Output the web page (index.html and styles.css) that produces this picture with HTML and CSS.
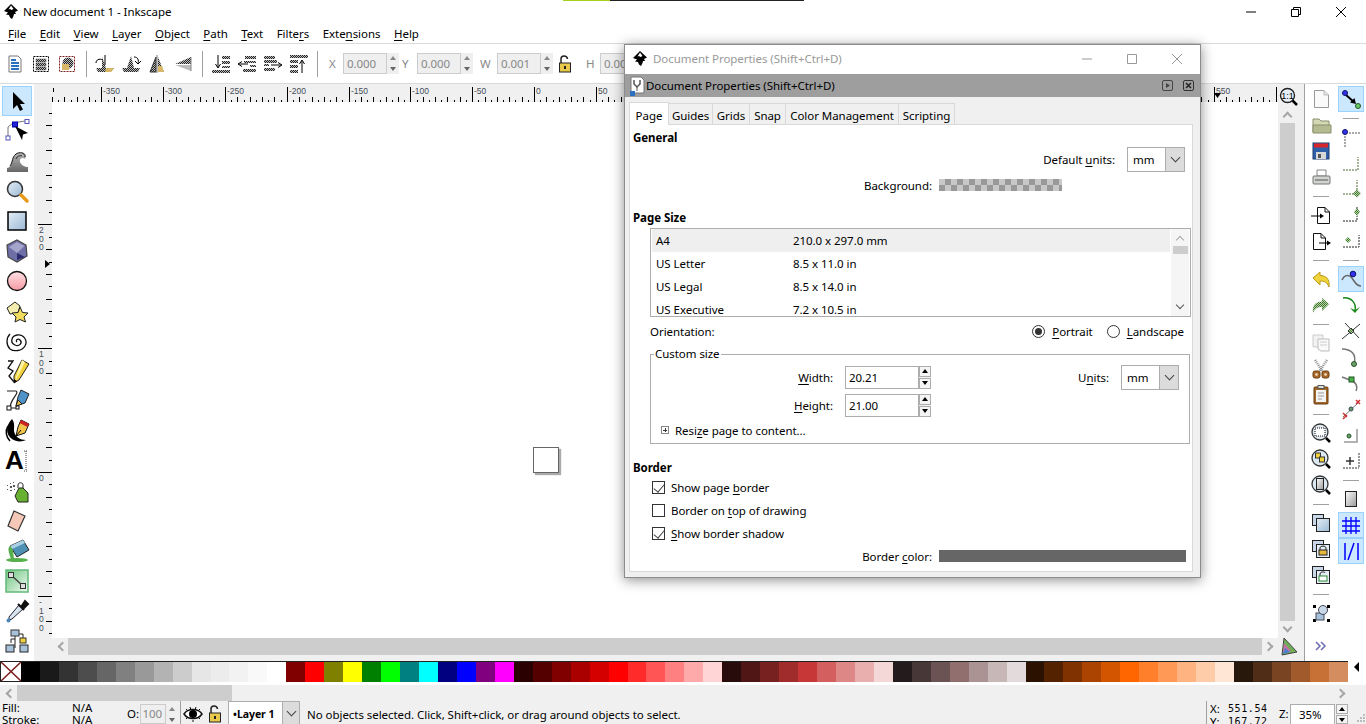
FILE: index.html
```html
<!DOCTYPE html>
<html lang="en">
<head>
    <title>New document 1 - Inkscape</title>
    <link rel="stylesheet" href="styles.css">
</head>
<body>
    <!-- shared gradients and the dither used by disabled icons -->
    <svg class="defs" aria-hidden="true">
        <defs>
            <pattern id="dith" width="2" height="2" patternUnits="userSpaceOnUse"><rect width="2" height="2" fill="#bbb"/><rect width="1" height="1" fill="#222"/><rect x="1" y="1" width="1" height="1" fill="#222"/></pattern>
            <pattern id="dithGreen" width="2" height="2" patternUnits="userSpaceOnUse"><rect width="2" height="2" fill="#b9cfa8"/><rect width="1" height="1" fill="#3d7a2e"/><rect x="1" y="1" width="1" height="1" fill="#3d7a2e"/></pattern>
            <linearGradient id="gBlue" x1="0" y1="0" x2="1" y2="1"><stop offset="0" stop-color="#e4edf5"/><stop offset="1" stop-color="#9bb9d6"/></linearGradient>
            <linearGradient id="gPink" x1="0" y1="0" x2="0" y2="1"><stop offset="0" stop-color="#ffe0e3"/><stop offset="1" stop-color="#f59aa5"/></linearGradient>
            <linearGradient id="gGray" x1="0" y1="0" x2="0" y2="1"><stop offset="0" stop-color="#bbb"/><stop offset="1" stop-color="#666"/></linearGradient>
            <linearGradient id="gGreen" x1="0" y1="0" x2="1" y2="1"><stop offset="0" stop-color="#6cc47e"/><stop offset="1" stop-color="#f2faf3"/></linearGradient>
            <linearGradient id="gPage" x1="0" y1="0" x2="1" y2="1"><stop offset="0" stop-color="#fff"/><stop offset="1" stop-color="#999"/></linearGradient>
        </defs>
    </svg>

    <div class="app">
        <div class="top-strip"><span class="strip-green"></span><span class="strip-dark"></span></div>

        <header class="titlebar">
            <svg class="logo" viewBox="0 0 16 16"><path d="M8 0 15 6.500 12 8 13 10H11L10.500 12 9 15 7 13.500 6 11 3 10.500 5 8.500 1 7Z"/><path d="M8 1.500 10.500 5 8.500 6 7 5 5.500 5.500Z" fill="#fff"/></svg>
            <span class="title-text">New document 1 - Inkscape</span>
            <div class="win-buttons">
                <svg viewBox="0 0 12 12"><path d="M1 6H11" stroke="#000"/></svg>
                <svg viewBox="0 0 12 12"><path d="M1.500 3.500H8.500V10.500H1.500ZM3.500 3.500V1.500H10.500V8.500H8.500" fill="none" stroke="#000"/></svg>
                <svg viewBox="0 0 12 12"><path d="M1 1 11 11M11 1 1 11" stroke="#000"/></svg>
            </div>
        </header>

        <nav class="menubar">
            <a><u>F</u>ile</a>
            <a><u>E</u>dit</a>
            <a><u>V</u>iew</a>
            <a><u>L</u>ayer</a>
            <a><u>O</u>bject</a>
            <a><u>P</u>ath</a>
            <a><u>T</u>ext</a>
            <a>Filte<u>r</u>s</a>
            <a>Exte<u>n</u>sions</a>
            <a><u>H</u>elp</a>
        </nav>

        <div class="commands">
            <span class="cmd"><svg class="ico" viewBox="0 0 24 24"><path d="M6 4H15L18 7V20H6Z" fill="#fff" stroke="#777"/><path d="M8 8H13M8 11H16M8 14H16M8 17H16" stroke="#2a6fc0" stroke-width="2"/></svg></span>
            <span class="cmd"><svg class="ico" viewBox="0 0 24 24"><rect x="4.500" y="4.500" width="15" height="15" fill="none" stroke="#000" stroke-dasharray="2 1"/><path d="M7 7H17V10H7ZM7 11H17V14H7ZM7 15H17V18H7Z" fill="url(#dith)" stroke="#555" stroke-width="0.500"/></svg></span>
            <span class="cmd"><svg class="ico" viewBox="0 0 24 24"><rect x="4.500" y="4.500" width="15" height="15" fill="none" stroke="#7a1f1f" stroke-dasharray="2 1"/><circle cx="13" cy="11" r="5.500" fill="url(#dith)"/><rect x="7" y="12" width="7" height="6" fill="#d8b766"/></svg></span>
            <span class="cmd-sep"></span>
            <span class="cmd"><svg class="ico" viewBox="0 0 24 24"><path d="M9 5 13 16H21L18 20H5L3 16H9Z" fill="url(#dith)"/><path d="M13 16H21L18 20H12Z" fill="#d8b766"/><path d="M12 3V13M3 11C3 8 6 6 10 8" fill="none" stroke="#000"/></svg></span>
            <span class="cmd"><svg class="ico" viewBox="0 0 24 24"><path d="M12 4 8 16H3L5 20H19L21 16H15Z" fill="url(#dith)"/><path d="M15 5C19 5 20 8 19 12M19 12 16 9M19 12 22 9" fill="none" stroke="#000"/></svg></span>
            <span class="cmd"><svg class="ico" viewBox="0 0 24 24"><path d="M11 5V20H5Z" fill="url(#dith)" stroke="#333"/><path d="M13 5V20H19Z" fill="url(#dith)"/><path d="M12 3V21" stroke="#777"/><path d="M13 14H17L19 20H13Z" fill="#d8b766"/></svg></span>
            <span class="cmd"><svg class="ico" viewBox="0 0 24 24"><path d="M20 5 4 12H20Z" fill="url(#dith)"/><path d="M20 13V19L4 13Z" fill="#bbb"/><path d="M20 5V19" stroke="#888"/></svg></span>
            <span class="cmd-sep"></span>
            <span class="cmd"><svg class="ico" viewBox="0 0 24 24"><path d="M9 3V15M6.500 12 9 16 11.500 12" fill="none" stroke="#000"/><path d="M13 4H21V7H13ZM13 9H21V12H13ZM13 14H21V16H13ZM3 18H21V21H3Z" fill="url(#dith)"/></svg></span>
            <span class="cmd"><svg class="ico" viewBox="0 0 24 24"><path d="M13 12H4M7 9.500 3 12 7 14.500" fill="none" stroke="#000"/><path d="M10 4H21V7H10ZM9 9H21V11H9ZM15 13H21V15H15ZM8 17H21V20H8Z" fill="url(#dith)"/></svg></span>
            <span class="cmd"><svg class="ico" viewBox="0 0 24 24"><path d="M10 13H20M17 10.500 21 13 17 15.500" fill="none" stroke="#000"/><path d="M3 4H14V7H3ZM3 8H16V11H3ZM3 12H8V14H3ZM3 16H14V19H3Z" fill="url(#dith)"/></svg></span>
            <span class="cmd"><svg class="ico" viewBox="0 0 24 24"><path d="M15 21V9M12.500 12 15 8 17.500 12" fill="none" stroke="#000"/><path d="M3 3H21V6H3ZM3 8H11V11H3ZM3 13H11V16H3ZM3 18H11V21H3Z" fill="url(#dith)"/></svg></span>
            <span class="cmd-sep short"></span>
            <label class="xy"><span class="xy-label x">X</span><span class="xy-input">0.000</span><span class="spin off"><i class="up"></i><i class="down"></i></span></label>
            <label class="xy"><span class="xy-label y">Y</span><span class="xy-input">0.000</span><span class="spin off"><i class="up"></i><i class="down"></i></span></label>
            <label class="xy"><span class="xy-label w">W</span><span class="xy-input">0.001</span><span class="spin off"><i class="up"></i><i class="down"></i></span></label>
            <svg class="ico" viewBox="0 0 24 24"><path d="M8 11V7C8 3 14 3 14.500 7" fill="none" stroke="#222" stroke-width="1.500"/><rect x="6.500" y="11" width="11" height="9" fill="#e8c84a" stroke="#222"/><rect x="11" y="14" width="2" height="3" fill="#222"/></svg>
            <label class="xy"><span class="xy-label h">H</span><span class="xy-input">0.000</span></label>
        </div>

        <main class="work">
            <aside class="tools">
                <span class="tool on"><svg class="ico" viewBox="0 0 24 24"><path d="M8 3V20L12 16 15 22 18 20.500 15 15H20Z"/></svg></span>
                <span class="tool"><svg class="ico" viewBox="0 0 24 24"><path d="M3 17V8L8 4 20 2" fill="none" stroke="#777"/><rect x="7.500" y="3" width="5" height="5" fill="#22d" stroke="#00a"/><rect x="1" y="17" width="4" height="4" fill="#fff" stroke="#55b"/><rect x="20" y="0.500" width="4" height="4" fill="#fff" stroke="#55b"/><path d="M10 7 23 14 18 15.500 17 21Z"/></svg></span>
                <span class="tool"><svg class="ico" viewBox="0 0 24 24"><path d="M2 23V19C5 19 6 16 7 11 8 6 12 3 16 3 21 3 22 7 20 10 18 8 14 9 15 13 16 16 20 18 23 18V23Z" fill="url(#gGray)"/><path d="M5 17C8 13 7 8 11 5 14 3 20 3 20 8M11 10C12 7 15 6 17 7" fill="none" stroke="#222"/></svg></span>
                <span class="tool"><svg class="ico" viewBox="0 0 24 24"><circle cx="10" cy="10" r="7.500" fill="url(#gBlue)" stroke="#333" stroke-width="1.500"/><path d="M16 16 22 22" stroke="#e89a1c" stroke-width="3.500" stroke-linecap="round"/></svg></span>
                <span class="tool"><svg class="ico" viewBox="0 0 24 24"><rect x="3" y="3" width="18" height="18" fill="url(#gBlue)" stroke="#000" stroke-width="1.500"/></svg></span>
                <span class="tool"><svg class="ico" viewBox="0 0 24 24"><path d="M12 1 21 6 22 17 12 23 3 18 2 6Z" fill="#6f6fa8" stroke="#444" stroke-width="1.200"/><path d="M12 3 19.500 7 12 14 4 8Z" fill="#a5a5cc"/><path d="M12 14 20 18 12 21Z" fill="#2b2b6e"/></svg></span>
                <span class="tool"><svg class="ico" viewBox="0 0 24 24"><circle cx="12" cy="12" r="9.500" fill="url(#gPink)" stroke="#111" stroke-width="1.300"/></svg></span>
                <span class="tool"><svg class="ico" viewBox="0 0 24 24"><path d="M2 9 10 3 15 7 13 14 5 15Z" fill="#f5edb0" stroke="#222"/><path d="M15 8 17.500 13.500 23 14 19 18 20.500 23 15 20.500 10 23 11 18 7 14 13 13.500Z" fill="#f2dc60" stroke="#222"/></svg></span>
                <span class="tool"><svg class="ico" viewBox="0 0 24 24"><path d="M12 13C10 11 13 9 15 11 18 14 14 18 10 16 5 14 6 7 12 6 19 5 23 12 20 17 17 22 9 23 5 20 1 16 1 9 5 5" fill="none" stroke="#111" stroke-width="1.300"/></svg></span>
                <span class="tool"><svg class="ico" viewBox="0 0 24 24"><path d="M3 2H8L3 9 8 12 4 17 9 23" fill="none" stroke="#111" stroke-width="1.300"/><path d="M17 1 24 5 14 21 9 24 9 17Z" fill="#f2d23a" stroke="#222"/><path d="M17 1 20 3 11 21 9 24Z" fill="#fff3a8"/><path d="M9 20 9 24 12 22Z"/></svg></span>
                <span class="tool"><svg class="ico" viewBox="0 0 24 24"><path d="M2 2H11C15 4 5 10 5 19H14" fill="none" stroke="#222" stroke-width="1.200"/><rect x="2" y="17" width="4" height="4" fill="#fff" stroke="#111"/><rect x="11" y="17" width="3" height="3" fill="#fff" stroke="#111"/><path d="M16 1 24 5 20 14 11 17 13 8Z" fill="#4f93c8" stroke="#222"/><path d="M13 11 11 17 17 15Z" fill="#f0c44a" stroke="#222"/></svg></span>
                <span class="tool"><svg class="ico" viewBox="0 0 24 24"><path d="M7 0C0 7 1 16 7 20 11 23 17 23 21 21 15 21 10 18 9 12 9 8 10 4 7 0Z"/><path d="M3 7C0 12 1 18 5 22" fill="none" stroke="#000" stroke-width="1.500"/><path d="M16 1 24 5 20 14 11 17 13 8Z" fill="#f0c44a" stroke="#111"/><path d="M16 1 24 5 22.500 8 14.500 4Z" fill="#c22"/><path d="M11 17 16 11" stroke="#000"/></svg></span>
                <span class="tool"><svg class="ico" viewBox="0 0 24 24"><text class="tool-a" x="0" y="20">A</text><path d="M19 2H23M21 2V22M19 22H23" fill="none" stroke="#444" stroke-dasharray="1 1"/></svg></span>
                <span class="tool"><svg class="ico" viewBox="0 0 24 24"><path d="M14 9H18L23 14V23H13L10 17Z" fill="#68b030" stroke="#222"/><path d="M13 9V6C13 3 18 3 18 6V9" fill="none" stroke="#222"/><path d="M2 6h1v1H2ZM5 4h1v1H5ZM8 3h1v1H8ZM5 7h2v2H5ZM8 6h2v2H8ZM2 10h1v1H2ZM5 11h2v1H5ZM9 10h1v1H9Z" fill="#555"/></svg></span>
                <span class="tool"><svg class="ico" viewBox="0 0 24 24"><path d="M9 2 20 7 13 22 3 17Z" fill="#f6c8b8" stroke="#333" stroke-width="1.200"/></svg></span>
                <span class="tool"><svg class="ico" viewBox="0 0 24 24"><path d="M5 7 18 1 24 11 12 18Z" fill="#4f90b5" stroke="#222"/><path d="M5 7 18 1 20 4 7 10Z" fill="#a8d0e4"/><path d="M5 7C2 9 4 14 6 20L9 20 8 11Z" fill="#57b04c"/><ellipse cx="12" cy="21" rx="11" ry="2" fill="#57b04c"/></svg></span>
                <span class="tool"><svg class="ico" viewBox="0 0 24 24"><rect x="1" y="1" width="22" height="22" fill="url(#gGreen)" stroke="#62b878" stroke-width="1.500"/><path d="M6 6 18 17" stroke="#444" stroke-width="1.500"/><rect x="3.500" y="3.500" width="5" height="5" fill="#ddd" stroke="#333"/><rect x="15.500" y="14.500" width="5" height="5" fill="#ddd" stroke="#333"/></svg></span>
                <span class="tool"><svg class="ico" viewBox="0 0 24 24"><path d="M14 6 18 10 7 20 4 21 4 18Z" fill="#d7e4ee" stroke="#223"/><path d="M13 5 19 11M16 8 20 2 23 5 18 10" fill="#111" stroke="#111" stroke-width="2"/><circle cx="3.500" cy="21.500" r="2" fill="#4b86b8"/></svg></span>
                <span class="tool"><svg class="ico" viewBox="0 0 24 24"><path d="M10 7V19M10 5H18V12M6 14V10H10" fill="none" stroke="#222"/><rect x="6" y="1" width="8" height="6" fill="#a8c2dc" stroke="#333"/><rect x="15" y="9" width="6" height="5" fill="#f2d23a" stroke="#333"/><rect x="1" y="16" width="8" height="7" fill="#a8c2dc" stroke="#222"/><rect x="15" y="16" width="8" height="7" fill="#a8c2dc" stroke="#222"/></svg></span>
            </aside>

            <section class="center">
                <div class="corner"></div>
                <div class="hruler" id="hruler"></div>
                <div class="one-to-one"><svg class="ico" viewBox="0 0 24 24"><circle cx="10.500" cy="10.500" r="7" fill="#e6eff6" stroke="#222" stroke-width="1.400"/><path d="M15.500 15.500 20 20" stroke="#000" stroke-width="2.500"/><text class="one-text" x="10.500" y="13.500" text-anchor="middle">1:1</text></svg></div>
                <div class="vruler" id="vruler"></div>
                <div class="canvas"><div class="page"></div></div>
                <div class="vscroll">
                    <span class="sb-btn"><i class="chev up"></i></span>
                    <span class="sb-thumb"></span>
                    <span class="sb-btn"><i class="chev down"></i></span>
                </div>
                <div class="hscroll">
                    <span class="hb-btn"><i class="chev left"></i></span>
                    <span class="hb-thumb"></span>
                    <span class="hb-btn"><i class="chev right"></i></span>
                </div>
                <div class="wheel"><svg class="ico" viewBox="0 0 24 24"><path d="M8 3 21 17 6 20Z" fill="#6fae55" stroke="#444"/><path d="M8 8 15 16 7 18Z" fill="#c66fa8"/><path d="M9 13 14 17 7 19Z" fill="#4f7fd0"/></svg></div>
            </section>

            <aside class="side">
                <div class="side-col">
                    <span class="sbtn"><svg class="ico" viewBox="0 0 24 24"><path d="M5.500 3.500H15L19.500 8V20.500H5.500Z" fill="#fafafa" stroke="#999"/><path d="M15 3.500V8H19.500" fill="#e6e6e6" stroke="#bbb"/></svg></span>
                    <span class="sbtn"><svg class="ico" viewBox="0 0 24 24"><path d="M4 19V6H10L12 8H20V19Z" fill="#d4d8b4" stroke="#8a8f6c"/><path d="M4 12H22V20H4Z" fill="#b5bb90" stroke="#8a8f6c"/></svg></span>
                    <span class="sbtn"><svg class="ico" viewBox="0 0 24 24"><rect x="4" y="4" width="16" height="16" fill="#2f5fa8" stroke="#1c3b70"/><rect x="5" y="4.500" width="14" height="4" fill="#d8262c"/><rect x="7" y="13" width="10" height="7" fill="#d8d8d8"/><rect x="9" y="15" width="3" height="4" fill="#555"/></svg></span>
                    <span class="sbtn"><svg class="ico" viewBox="0 0 24 24"><path d="M8 5H17V11H8Z" fill="#fff" stroke="#888"/><rect x="4" y="11" width="17" height="8" rx="1" fill="#d0d3d0" stroke="#777"/><path d="M6 15H19" stroke="#555"/></svg></span>
                    <span class="ssep"></span>
                    <span class="sbtn"><svg class="ico" viewBox="0 0 24 24"><path d="M8.500 4.500H16L20.500 9V20.500H8.500Z" fill="#fff" stroke="#111"/><path d="M16 4.500V9H20.500" fill="none" stroke="#111"/><path d="M2 13H12" stroke="#000"/><path d="M11 10.500 15 13 11 15.500Z"/></svg></span>
                    <span class="sbtn"><svg class="ico" viewBox="0 0 24 24"><path d="M4.500 4.500H12L16.500 9V20.500H4.500Z" fill="#fff" stroke="#111"/><path d="M12 4.500V9H16.500" fill="none" stroke="#111"/><path d="M10 14H19" stroke="#000"/><path d="M18 11.500 22 14 18 16.500Z"/></svg></span>
                    <span class="ssep"></span>
                    <span class="sbtn"><svg class="ico" viewBox="0 0 24 24"><path d="M4 11 11 5V8.500C17 8.500 21 12 20 20 18 15 15 14 11 14V18Z" fill="#f0d23a" stroke="#b89a1a"/></svg></span>
                    <span class="sbtn"><svg class="ico" viewBox="0 0 24 24"><path d="M20 11 13 5V8.500C7 8.500 3 12 4 20 6 15 9 14 13 14V18Z" fill="url(#dithGreen)"/></svg></span>
                    <span class="ssep"></span>
                    <span class="sbtn"><svg class="ico" viewBox="0 0 24 24"><path d="M4 4H14V16H4Z" fill="#f2f2f2" stroke="#ccc"/><path d="M9 8H20V20H12L9 18Z" fill="#fafafa" stroke="#bbb"/><path d="M11 11H18M11 14H18" stroke="#ccc"/></svg></span>
                    <span class="sbtn"><svg class="ico" viewBox="0 0 24 24"><path d="M6 3 14 15M18 3 10 15" stroke="#8a8a8a" stroke-width="2.500" stroke-dasharray="1 1"/><rect x="4" y="14" width="7" height="7" rx="2" fill="#a9692a" stroke="#6b3d10"/><rect x="13" y="14" width="7" height="7" rx="2" fill="#a9692a" stroke="#6b3d10"/><circle cx="7.500" cy="17.500" r="1.300" fill="#f2e2c8"/><circle cx="16.500" cy="17.500" r="1.300" fill="#f2e2c8"/></svg></span>
                    <span class="sbtn"><svg class="ico" viewBox="0 0 24 24"><rect x="5" y="4" width="14" height="17" rx="1" fill="#a0692a" stroke="#6b3d10"/><path d="M7 7H17V19H7Z" fill="#f4f4f4"/><rect x="9" y="2.500" width="6" height="3" fill="#ddd" stroke="#555"/><path d="M9 10H15M9 13H15M9 16H13" stroke="#999"/></svg></span>
                    <span class="ssep"></span>
                    <span class="sbtn"><svg class="ico" viewBox="0 0 24 24"><circle cx="11" cy="11" r="8" fill="#dce8f2" stroke="#333" stroke-width="1.300"/><rect x="6" y="7" width="10" height="8" fill="#fff" stroke="#111" stroke-dasharray="1 1"/><path d="M17 17 21 21" stroke="#000" stroke-width="2.500"/></svg></span>
                    <span class="sbtn"><svg class="ico" viewBox="0 0 24 24"><circle cx="11" cy="11" r="8" fill="#dce8f2" stroke="#333" stroke-width="1.300"/><rect x="6.500" y="6" width="5" height="5" fill="#f2d23a" stroke="#333"/><rect x="10.500" y="10" width="5" height="5" fill="#f2d23a" stroke="#333"/><path d="M17 17 21 21" stroke="#000" stroke-width="2.500"/></svg></span>
                    <span class="sbtn"><svg class="ico" viewBox="0 0 24 24"><circle cx="11" cy="11" r="8" fill="#dce8f2" stroke="#333" stroke-width="1.300"/><rect x="7.500" y="5.500" width="7" height="11" fill="url(#gPage)" stroke="#222"/><path d="M17 17 21 21" stroke="#000" stroke-width="2.500"/></svg></span>
                    <span class="ssep"></span>
                    <span class="sbtn"><svg class="ico" viewBox="0 0 24 24"><rect x="3.500" y="3.500" width="11" height="11" fill="#c8d8e8" stroke="#222"/><rect x="7.500" y="7.500" width="13" height="13" fill="url(#gBlue)" stroke="#222"/></svg></span>
                    <span class="sbtn"><svg class="ico" viewBox="0 0 24 24"><rect x="3.500" y="3.500" width="11" height="11" fill="#c8d8e8" stroke="#222"/><rect x="7.500" y="7.500" width="13" height="13" fill="#e4edf5" stroke="#222"/><path d="M11 13V11C11 8.500 17 8.500 17 11V13" fill="none" stroke="#222"/><rect x="10" y="13" width="8" height="5" fill="#e8b83a" stroke="#222"/></svg></span>
                    <span class="sbtn"><svg class="ico" viewBox="0 0 24 24"><rect x="3.500" y="3.500" width="11" height="11" fill="#c8d8e8" stroke="#222"/><rect x="7.500" y="7.500" width="13" height="13" fill="#e4edf5" stroke="#222"/><path d="M11 13V11C11 8.500 16 8.500 16 10" fill="none" stroke="#222"/><rect x="10" y="13" width="8" height="5" fill="#fff" stroke="#2b8a34"/></svg></span>
                    <span class="ssep"></span>
                    <span class="sbtn"><svg class="ico" viewBox="0 0 24 24"><path d="M4 4h3v3H4ZM18 4h3v3h-3ZM4 18h3v3H4ZM18 18h3v3h-3Z"/><rect x="7" y="12" width="8" height="7" fill="#a8c2dc" stroke="#445"/><circle cx="14" cy="9" r="4.500" fill="#c8d8e8" stroke="#445"/></svg></span>
                    <span class="chevrons"><svg viewBox="0 0 12 10" width="12" height="10"><path d="M1 1 5 5 1 9M6 1 10 5 6 9" fill="none" stroke="#6a6ab0" stroke-width="1.500"/></svg></span>
                </div>
                <div class="side-col">
                    <span class="sbtn on"><svg class="ico" viewBox="0 0 24 24"><path d="M7 8 15 15" stroke="#000" stroke-width="2"/><path d="M17 17 11 15.500 15.500 11Z"/><circle cx="6" cy="6" r="2.500" fill="#33e" stroke="#116"/><circle cx="19" cy="19" r="2.500" fill="#6c6" stroke="#252"/></svg></span>
                    <span class="ssep"></span>
                    <span class="sbtn"><svg class="ico" viewBox="0 0 24 24"><path d="M10 8H21M6 11V22" stroke="#555" stroke-dasharray="2 1"/><circle cx="6" cy="7" r="2.500" fill="#33e" stroke="#116"/></svg></span>
                    <span class="sbtn"><svg class="ico" viewBox="0 0 24 24"><path d="M4 19H19V6" fill="none" stroke="#8a9a7a" stroke-width="1.500" stroke-dasharray="2 1"/></svg></span>
                    <span class="sbtn"><svg class="ico" viewBox="0 0 24 24"><path d="M4 17H18V3" fill="none" stroke="#8a9a7a" stroke-width="1.500" stroke-dasharray="2 1"/><path d="M18 12.500 22 16.500 18 20.500 14 16.500Z" fill="url(#dithGreen)"/></svg></span>
                    <span class="sbtn"><svg class="ico" viewBox="0 0 24 24"><path d="M4 18H18V13M18 6V4" fill="none" stroke="#222" stroke-dasharray="2 1"/><path d="M18 5 21 9 18 13 15 9Z" fill="url(#dithGreen)"/></svg></span>
                    <span class="sbtn"><svg class="ico" viewBox="0 0 24 24"><path d="M4 18H20V6" fill="none" stroke="#222" stroke-dasharray="2 1"/><path d="M9 8 12 11 9 14 6 11Z" fill="url(#dithGreen)"/></svg></span>
                    <span class="ssep"></span>
                    <span class="sbtn on"><svg class="ico" viewBox="0 0 24 24"><path d="M3 13C5 8 10 7 13 11S17 19 22 19" fill="none" stroke="#666" stroke-width="1.500"/><circle cx="14" cy="7" r="2.800" fill="#33e" stroke="#116"/></svg></span>
                    <span class="sbtn"><svg class="ico" viewBox="0 0 24 24"><path d="M4 5C11 4 18 9 16 18" fill="none" stroke="#1c8a1c" stroke-width="1.500"/><path d="M11 15 16 20 21 14 16 17Z" fill="#1c8a1c"/></svg></span>
                    <span class="sbtn"><svg class="ico" viewBox="0 0 24 24"><path d="M3 20 21 5M6 4 20 19" stroke="#333"/><path d="M12 9 15 12 12 15 9 12Z" fill="url(#dithGreen)" stroke="#333"/></svg></span>
                    <span class="sbtn"><svg class="ico" viewBox="0 0 24 24"><path d="M3 4C12 4 18 9 15 19" fill="none" stroke="#777" stroke-width="1.500"/><circle cx="15" cy="19" r="2.500" fill="#6c9f6c" stroke="#252"/></svg></span>
                    <span class="sbtn"><svg class="ico" viewBox="0 0 24 24"><path d="M3 6 11 9C17 11 19 15 17 20" fill="none" stroke="#777" stroke-width="1.500"/><rect x="10" y="6" width="5" height="5" fill="#4ab04a" stroke="#252"/></svg></span>
                    <span class="sbtn"><svg class="ico" viewBox="0 0 24 24"><path d="M4 20 20 5" stroke="#777"/><path d="M4 16 8 20M8 18 4 22M17 3 21 7M21 3 17 7" stroke="#c33" stroke-width="1.500"/><circle cx="12" cy="12" r="2" fill="#6a9f6a" stroke="#345"/></svg></span>
                    <span class="sbtn"><svg class="ico" viewBox="0 0 24 24"><path d="M18 6V19H5" fill="none" stroke="#999" stroke-width="1.500"/><circle cx="10" cy="13" r="2" fill="#6a9f6a" stroke="#252"/></svg></span>
                    <span class="sbtn"><svg class="ico" viewBox="0 0 24 24"><path d="M4 19H20M20 4V19" stroke="#333" stroke-dasharray="2 1"/><path d="M7 12H15M11 8V16" stroke="#333" stroke-width="1.500"/></svg></span>
                    <span class="ssep"></span>
                    <span class="sbtn"><svg class="ico" viewBox="0 0 24 24"><rect x="6.500" y="4.500" width="11" height="15" fill="url(#gPage)" stroke="#222"/></svg></span>
                    <span class="sbtn on"><svg class="ico" viewBox="0 0 24 24"><path d="M7 4V21M12 4V21M17 4V21M3 8H21M3 13H21M3 18H21" stroke="#00f" stroke-width="1.300"/></svg></span>
                    <span class="sbtn on"><svg class="ico" viewBox="0 0 24 24"><path d="M6 4V21M19 4V21M9 21 15 4" stroke="#00f" stroke-width="1.500"/></svg></span>
                </div>
            </aside>
        </main>

        <div class="palette">
            <div class="none-swatch"><svg viewBox="0 0 20 20" preserveAspectRatio="none"><path d="M0 0 20 20M20 0 0 20" stroke="#7a1c1c" stroke-width="1.500"/></svg></div>
            <div class="swatches" id="swatches"></div>
            <i class="palette-menu"></i>
        </div>

        <div class="palette-scroll">
            <span class="hb-btn"><i class="chev left"></i></span>
            <span class="pal-thumb"></span>
            <span class="hb-btn pal-right"><i class="chev right"></i></span>
        </div>

        <footer class="status">
            <div class="fill-stroke">
                <span>Fill:</span><span>N/A</span>
                <span>Stroke:</span><span>N/A</span>
            </div>
            <span class="o-label">O:</span>
            <span class="o-input">100</span>
            <span class="spin off"><i class="up"></i><i class="down"></i></span>
            <span class="status-sep"></span>
            <svg class="ico eye" viewBox="0 0 24 24"><path d="M3 12C7 6 17 6 21 12 17 18 7 18 3 12Z" fill="#fff" stroke="#111" stroke-width="1.500"/><circle cx="12" cy="12" r="4"/><path d="M5 7 7 9M9 5 10 8M15 5 14 8M19 7 17 9M5 17 7 15M12 18V20M19 17 17 15" stroke="#111"/></svg>
            <svg class="ico eye layer-lock" viewBox="0 0 24 24"><path d="M8 11V7C8 3 14 3 14.500 7" fill="none" stroke="#222" stroke-width="1.500"/><rect x="6.500" y="11" width="11" height="9" fill="#e8c84a" stroke="#222"/><rect x="11" y="14" width="2" height="3" fill="#222"/></svg>
            <div class="layer-combo"><span class="layer-name">&#8226;Layer 1</span><span class="combo-arrow"></span></div>
            <span class="status-text">No objects selected. Click, Shift+click, or drag around objects to select.</span>
            <div class="coords">
                <span>X:</span><span class="mono">551.54</span>
                <span>Y:</span><span class="mono">167.72</span>
            </div>
            <span class="z-label">Z:</span>
            <span class="z-input">35%</span>
            <span class="spin z-spin"><i class="up"></i><i class="down"></i></span>
            <svg class="grip" viewBox="0 0 11 11"><path d="M8 1h2v2H8ZM5 4h2v2H5ZM8 4h2v2H8ZM2 7h2v2H2ZM5 7h2v2H5ZM8 7h2v2H8Z" fill="#bbb"/></svg>
        </footer>
    </div>

    <!-- floating dialog window -->
    <section class="dialog">
        <div class="dlg-title">
            <svg class="logo" viewBox="0 0 16 16"><path d="M8 0 15 6.500 12 8 13 10H11L10.500 12 9 15 7 13.500 6 11 3 10.500 5 8.500 1 7Z"/><path d="M8 1.500 10.500 5 8.500 6 7 5 5.500 5.500Z" fill="#fff"/></svg>
            <span class="dlg-title-text">Document Properties (Shift+Ctrl+D)</span>
            <div class="dlg-win-buttons">
                <svg viewBox="0 0 12 12"><path d="M1 6H11" stroke="#999"/></svg>
                <svg viewBox="0 0 12 12"><path d="M1.500 1.500H10.500V10.500H1.500Z" fill="none" stroke="#999"/></svg>
                <svg viewBox="0 0 12 12"><path d="M1 1 11 11M11 1 1 11" stroke="#999"/></svg>
            </div>
        </div>
        <div class="dock-bar">
            <svg class="dock-icon" viewBox="0 0 16 20"><path d="M2 1H12L15 4V17H2Z" fill="#fff" stroke="#777"/><path d="M5 4V8L8 11 11 8V4" fill="none" stroke="#555" stroke-width="1.500"/><path d="M8 11V15" stroke="#555"/><rect x="1" y="15" width="5" height="5" fill="#2a6fc0"/></svg>
            <span class="dock-title">Document Properties (Shift+Ctrl+D)</span>
            <svg class="dock-btn" viewBox="0 0 11 11"><rect x="0.500" y="0.500" width="10" height="10" rx="1.500" fill="none" stroke="#444"/><path d="M4 3 8 5.500 4 8Z" fill="#444"/></svg>
            <svg class="dock-btn" viewBox="0 0 11 11"><rect x="0.500" y="0.500" width="10" height="10" rx="1.500" fill="none" stroke="#333"/><path d="M3 3 8 8M8 3 3 8" stroke="#222" stroke-width="1.500"/></svg>
        </div>
        <div class="dlg-body">
            <div class="tabs">
                <span class="tab active">Page</span>
                <span class="tab t-guides">Guides</span>
                <span class="tab t-grids">Grids</span>
                <span class="tab t-snap">Snap</span>
                <span class="tab t-color">Color Management</span>
                <span class="tab t-script">Scripting</span>
            </div>
            <div class="panel">
                <h3 class="group">General</h3>
                <div class="units-row">
                    <span>Default <u>u</u>nits:</span>
                    <span class="combo wide"><span class="combo-val">mm</span><span class="combo-arrow"></span></span>
                </div>
                <div class="pref-row bg-row">
                    <span class="pref-label">Background:</span>
                    <span class="checker"></span>
                </div>

                <h3 class="group page-size">Page Size</h3>
                <div class="size-list">
                    <div class="size-rows">
                        <div class="size-row sel"><span class="size-name">A4</span><span>210.0 x 297.0 mm</span></div>
                        <div class="size-row"><span class="size-name">US Letter</span><span>8.5 x 11.0 in</span></div>
                        <div class="size-row"><span class="size-name">US Legal</span><span>8.5 x 14.0 in</span></div>
                        <div class="size-row"><span class="size-name">US Executive</span><span>7.2 x 10.5 in</span></div>
                    </div>
                    <div class="list-scroll">
                        <i class="chev up"></i>
                        <span class="list-thumb"></span>
                        <i class="chev down dark"></i>
                    </div>
                </div>

                <div class="orient-row">
                    <span>Orientation:</span>
                    <span class="radio on"></span><span class="radio-text"><u>P</u>ortrait</span>
                    <span class="radio"></span><span class="radio-text"><u>L</u>andscape</span>
                </div>

                <div class="frame">
                    <span class="legend">Custom size</span>
                    <div class="frame-row">
                        <span class="frame-label"><u>W</u>idth:</span>
                        <span class="num-input">20.21</span>
                        <span class="spin boxed"><i class="up"></i><i class="down"></i></span>
                        <span class="units-label">U<u>n</u>its:</span>
                        <span class="combo"><span class="combo-val">mm</span><span class="combo-arrow"></span></span>
                    </div>
                    <div class="frame-row second">
                        <span class="frame-label"><u>H</u>eight:</span>
                        <span class="num-input">21.00</span>
                        <span class="spin boxed"><i class="up"></i><i class="down"></i></span>
                    </div>
                    <div class="resize-row">
                        <span class="expander"></span>
                        <span>Resi<u>z</u>e page to content...</span>
                    </div>
                </div>

                <h3 class="group border-head">Border</h3>
                <div class="check-row"><span class="check on"></span><span>Show page <u>b</u>order</span></div>
                <div class="check-row"><span class="check"></span><span>Border on <u>t</u>op of drawing</span></div>
                <div class="check-row"><span class="check on"></span><span><u>S</u>how border shadow</span></div>
                <div class="pref-row color-row">
                    <span class="pref-label">Border <u>c</u>olor:</span>
                    <span class="border-color"></span>
                </div>
            </div>
        </div>
    </section>

    <script src="script.js"></script>
</body>
</html>
```
FILE: styles.css
```css
* {
    box-sizing: border-box;
}
html, body {
    margin: 0;
    height: 724px;
    overflow: hidden;
}
body {
    font-family: 'Noto Sans', 'Open Sans', sans-serif;
    font-size: 11.500px;
    letter-spacing: -0.050px;
    color: #000;
    background: #fff;
}
u {
    text-underline-offset: 2px;
}
i {
    display: block;
}
.defs {
    position: absolute;
    width: 0;
    height: 0;
}
.ico {
    width: 24px;
    height: 24px;
    display: block;
    flex: none;
    overflow: visible;
}
.app {
    display: flex;
    flex-direction: column;
    height: 724px;
}

/* top strip of the window behind */
.top-strip {
    position: absolute;
    top: 0;
    left: 563px;
    display: flex;
    height: 1px;
}
.strip-green {
    width: 47px;
    background: #a4cf1f;
}
.strip-dark {
    width: 194px;
    background: #222;
}

/* title + menu */
.titlebar {
    height: 23px;
    display: flex;
    align-items: center;
    padding-left: 3px;
    flex: none;
}
.logo {
    width: 16px;
    height: 16px;
    flex: none;
}
.title-text {
    margin-left: 4px;
}
.win-buttons {
    margin-left: auto;
    display: flex;
    gap: 33px;
    padding-right: 19px;
}
.win-buttons svg {
    width: 12px;
    height: 12px;
}
.menubar {
    height: 21px;
    display: flex;
    flex: none;
    gap: 13.500px;
    padding-left: 8px;
    border-bottom: 1px solid #dadada;
    line-height: 22px;
}

/* command bar */
.commands {
    height: 40px;
    display: flex;
    align-items: center;
    padding-left: 2px;
    flex: none;
    border-bottom: 1px solid #dadada;
}
.cmd {
    width: 26px;
    height: 26px;
    display: flex;
    align-items: center;
    justify-content: center;
    flex: none;
}
.cmd-sep {
    width: 12px;
    height: 26px;
    flex: none;
    background: linear-gradient(#a0a0a0, #a0a0a0) center / 1px 26px no-repeat;
}
.cmd-sep.short {
    width: 10px;
}
.xy {
    display: flex;
    align-items: center;
    flex: none;
}
.xy-label {
    color: #888;
    width: 21px;
    padding-left: 7px;
}
.xy-label.y {
    width: 18px;
    padding-left: 3px;
}
.xy-label.w {
    width: 24px;
    padding-left: 7px;
}
.xy-label.h {
    width: 23px;
    padding-left: 9px;
}
.xy-input {
    width: 44px;
    height: 21px;
    border: 1px solid #ccc;
    background: #efefef;
    color: #888;
    line-height: 19px;
    padding-left: 3px;
}

/* spin buttons */
.spin {
    width: 12px;
    flex: none;
    display: flex;
    flex-direction: column;
    background: #f0f0f0;
    height: 21px;
    gap: 1px;
}
.spin i {
    flex: 1;
    position: relative;
    background: #f4f4f4;
    border: 1px solid #adadad;
}
.spin.off i {
    background: #efefef;
    border-color: #efefef;
}
.spin i::after {
    content: '';
    position: absolute;
    left: 2px;
    top: 2px;
    border-left: 3px solid transparent;
    border-right: 3px solid transparent;
}
.spin .up::after {
    border-bottom: 4px solid #000;
}
.spin .down::after {
    border-top: 4px solid #000;
}
.spin.off .up::after {
    border-bottom-color: #888;
}
.spin.off .down::after {
    border-top-color: #666;
}
.spin.boxed {
    height: 23px;
}

/* workspace */
.work {
    flex: none;
    height: 577px;
    display: flex;
}
.tools {
    width: 34px;
    flex: none;
    padding: 2px 2px 0;
    display: flex;
    flex-direction: column;
}
.tool {
    height: 30px;
    display: flex;
    align-items: center;
    justify-content: center;
    border: 1px solid transparent;
}
.tool.on, .sbtn.on {
    background: #cce8ff;
    border: 1px solid #99d1ff;
}
.tool-a {
    font-family: 'Liberation Sans', sans-serif;
    font-weight: 700;
    font-size: 26px;
}
.center {
    flex: 1;
    background: #f0f0f0;
    display: grid;
    grid-template-columns: 18px 1226px 26px;
    grid-template-rows: 18px 536px 20px;
}
.hruler, .vruler {
    overflow: hidden;
}
.hruler svg, .vruler svg {
    display: block;
}
.ruler-text {
    font-family: 'Liberation Sans', sans-serif;
    font-size: 8.500px;
    letter-spacing: 0;
    fill: #454d57;
}
.one-to-one {
    padding-top: 1px;
    margin-left: -1px;
}
.one-text {
    font-family: 'Liberation Sans', sans-serif;
    font-size: 9px;
    letter-spacing: 0;
}
.canvas {
    background: #fff;
    position: relative;
    overflow: hidden;
}
.page {
    position: absolute;
    left: 481px;
    top: 345px;
    width: 26px;
    height: 26px;
    background: #fff;
    border: 1px solid #666;
    box-shadow: 2px 2px 1px #aaa;
}
.vscroll {
    margin: 4px 9px 0 2px;
    display: flex;
    flex-direction: column;
}
.sb-btn {
    height: 17px;
    flex: none;
    display: flex;
    align-items: center;
    justify-content: center;
}
.sb-thumb {
    flex: 1;
    background: #cdcdcd;
}
.hscroll {
    grid-column: 2;
    height: 17px;
    display: flex;
}
.hb-btn {
    width: 16px;
    flex: none;
    display: flex;
    align-items: center;
    justify-content: center;
}
.hb-thumb {
    flex: 1;
    background: #cdcdcd;
}
.wheel {
    margin: -3px 0 0 -2px;
}
.chev {
    width: 7px;
    height: 7px;
    border-right: 2px solid #a6a6a6;
    border-bottom: 2px solid #a6a6a6;
}
.chev.up {
    transform: translateY(2px) rotate(-135deg);
}
.chev.down {
    transform: translateY(-2px) rotate(45deg);
}
.chev.left {
    transform: translateX(2px) rotate(135deg);
}
.chev.right {
    transform: translateX(-2px) rotate(-45deg);
}
.side {
    width: 62px;
    flex: none;
    display: flex;
    gap: 4px;
    background: #fff;
    border-left: 1px solid #a0a0a0;
    padding: 2px 0 0 3px;
}
.side-col {
    width: 26px;
    display: flex;
    flex-direction: column;
}
.sbtn {
    height: 26px;
    flex: none;
    display: flex;
    align-items: center;
    justify-content: center;
}
.ssep {
    height: 12px;
    flex: none;
    background: linear-gradient(#a0a0a0, #a0a0a0) center / 16px 1px no-repeat;
}
.chevrons {
    margin-top: 13px;
    text-align: center;
}

/* colour palette */
.palette {
    height: 23px;
    flex: none;
    display: flex;
    background: #fff;
    position: relative;
}
.none-swatch {
    width: 21px;
    height: 21px;
    flex: none;
    border: 1px solid #222;
    border-right: 0;
}
.none-swatch svg {
    width: 100%;
    height: 100%;
    display: block;
}
.swatches {
    width: 1327px;
    height: 21px;
    flex: none;
    display: flex;
    border-top: 1px solid #222;
}
.swatch {
    flex: 1;
}
.palette-menu {
    margin: 1px 0 0 6px;
    width: 0;
    height: 0;
    border-top: 5px solid transparent;
    border-bottom: 5px solid transparent;
    border-right: 5px solid #000;
}
.palette-scroll {
    height: 16px;
    flex: none;
    display: flex;
    margin-top: 1px;
    background: #f0f0f0;
}
.pal-thumb {
    width: 215px;
    background: #cdcdcd;
    margin-left: 1px;
    flex: none;
}
.pal-right {
    margin-left: auto;
    margin-right: 16px;
}

/* status bar */
.status {
    flex: 1;
    min-height: 0;
    display: flex;
    align-items: flex-start;
    background: #f0f0f0;
    position: relative;
    overflow: hidden;
}
.fill-stroke {
    display: grid;
    grid-template-columns: 70px 40px;
    grid-auto-rows: 12px;
    width: 127px;
    padding-left: 2px;
    margin-top: 1px;
    line-height: 12px;
    flex: none;
}
.o-label {
    margin-top: 5px;
    width: 13px;
    flex: none;
}
.o-input {
    width: 26px;
    height: 20px;
    margin-top: 3px;
    flex: none;
    border: 1px solid #ccc;
    background: #efefef;
    color: #888;
    line-height: 18px;
    text-align: right;
    padding-right: 3px;
}
.status .spin {
    margin-top: 3px;
    height: 20px;
}
.status-sep {
    width: 1px;
    height: 24px;
    margin-left: 2px;
    background: #a0a0a0;
    flex: none;
}
.eye {
    margin: 1px 0 0 0;
}
.layer-lock {
    margin-left: -2px;
}
.layer-combo {
    width: 72px;
    height: 24px;
    margin-left: 1px;
    display: flex;
    flex: none;
    border: 1px solid #adadad;
    background: #fff;
}
.layer-name {
    flex: 1;
    font-weight: 700;
    font-size: 10.500px;
    line-height: 25px;
    padding-left: 4px;
}
.combo-arrow {
    width: 17px;
    flex: none;
    background: #dcdcdc;
    border-left: 1px solid #adadad;
    display: flex;
    align-items: center;
    justify-content: center;
}
.combo-arrow::after {
    content: '';
    width: 6px;
    height: 6px;
    border-right: 1px solid #444;
    border-bottom: 1px solid #444;
    transform: translateY(-2px) rotate(45deg);
}
.status-text {
    margin: 6px 0 0 7px;
    line-height: 16px;
    flex: none;
}
.coords {
    position: absolute;
    left: 1206px;
    top: 0;
    height: 30px;
    border-left: 1px solid #a0a0a0;
    padding: 1px 0 0 3px;
    display: grid;
    grid-template-columns: 18px 50px;
    grid-auto-rows: 13px;
    line-height: 13px;
}
.mono {
    font-family: 'DejaVu Sans Mono', 'Liberation Mono', monospace;
    font-size: 10px;
    letter-spacing: 0.600px;
}
.z-label {
    position: absolute;
    left: 1279px;
    top: 5px;
}
.z-input {
    position: absolute;
    left: 1290px;
    top: 3px;
    width: 45px;
    height: 21px;
    border: 1px solid #adadad;
    background: #fff;
    line-height: 19px;
    padding-left: 8px;
}
.status .z-spin {
    position: absolute;
    left: 1336px;
    top: 0;
}
.grip {
    position: absolute;
    right: 0;
    bottom: 0;
    width: 11px;
    height: 11px;
}

/* document properties dialog */
.dialog {
    position: absolute;
    left: 624px;
    top: 44px;
    width: 577px;
    height: 534px;
    background: #f0f0f0;
    border: 1px solid #8c8c8c;
    box-shadow: 0 2px 12px rgba(0, 0, 0, 0.45);
    display: flex;
    flex-direction: column;
}
.dlg-title {
    height: 29px;
    flex: none;
    background: #fff;
    display: flex;
    align-items: center;
    padding: 0 0 2px 7px;
}
.dlg-title-text {
    margin-left: 5px;
    color: #999;
}
.dlg-win-buttons {
    margin-left: auto;
    display: flex;
    gap: 33px;
    padding-right: 17px;
}
.dlg-win-buttons svg {
    width: 12px;
    height: 12px;
}
.dock-bar {
    height: 23px;
    flex: none;
    background: #9e9e9e;
    display: flex;
    align-items: center;
    padding-left: 4px;
}
.dock-icon {
    width: 16px;
    height: 20px;
    flex: none;
}
.dock-title {
    margin-left: 1px;
    flex: 1;
}
.dock-btn {
    width: 11px;
    height: 11px;
    margin-right: 10px;
    flex: none;
}
.dock-btn:last-child {
    margin-right: 6px;
}
.dlg-body {
    flex: 1;
    padding: 5px 7px 5px 4px;
    display: flex;
    flex-direction: column;
}
.tabs {
    display: flex;
    height: 23px;
    margin-bottom: -1px;
    align-items: flex-end;
    position: relative;
    z-index: 1;
}
.tab {
    height: 22px;
    line-height: 24px;
    text-align: center;
    border: 1px solid #d9d9d9;
    border-left: 0;
    flex: none;
}
.tab.active {
    width: 40px;
    height: 23px;
    line-height: 26px;
    background: #fff;
    border-left: 1px solid #d9d9d9;
    border-bottom: 0;
}
.t-guides { width: 44px; }
.t-grids { width: 37px; }
.t-snap { width: 36px; }
.t-color { width: 113px; }
.t-script { width: 56px; }
.panel {
    flex: 1;
    background: #fff;
    border: 1px solid #d9d9d9;
    padding: 5px 0 0 3px;
}
.group {
    margin: 0;
    height: 16px;
    line-height: 16px;
    font-size: 11.500px;
    font-weight: 700;
}
.units-row {
    height: 25px;
    margin-top: 1px;
    display: flex;
    align-items: center;
    justify-content: flex-end;
    gap: 12px;
    padding-right: 7px;
}
.combo {
    width: 58px;
    height: 25px;
    display: flex;
    flex: none;
    border: 1px solid #adadad;
    background: #fff;
}
.combo-val {
    flex: 1;
    line-height: 23px;
    padding-left: 5px;
}
.combo .combo-arrow {
    width: 19px;
}
.pref-row {
    display: flex;
    align-items: center;
    gap: 7px;
}
.pref-label {
    width: 299px;
    text-align: right;
    flex: none;
}
.bg-row {
    height: 12px;
    margin-top: 7px;
}
.checker {
    width: 123px;
    height: 12px;
    background: repeating-conic-gradient(#999 0 25%, #c8c8c8 0 50%) 0 0 / 12px 12px;
}
.page-size {
    margin-top: 19px;
}
.size-list {
    width: 541px;
    height: 89px;
    margin: 2px 0 0 17px;
    border: 1px solid #adadad;
    display: flex;
    overflow: hidden;
}
.size-rows {
    flex: 1;
    padding-left: 1px;
}
.size-row {
    height: 23px;
    display: flex;
    line-height: 23px;
    padding-left: 4px;
}
.size-row.sel {
    background: #efefef;
}
.size-name {
    width: 137px;
    flex: none;
}
.list-scroll {
    width: 18px;
    flex: none;
    display: flex;
    flex-direction: column;
    align-items: center;
    padding: 6px 0;
    margin: 0 1px;
    background: #f5f5f5;
}
.list-thumb {
    width: 15px;
    height: 8px;
    background: #cdcdcd;
    margin-top: 5px;
}
.list-scroll .chev {
    width: 6px;
    height: 6px;
    border-width: 1.500px;
}
.list-scroll .chev.down {
    margin-top: auto;
}
.chev.dark {
    border-color: #555;
}
.orient-row {
    height: 20px;
    margin: 4px 8px 0 17px;
    display: flex;
    align-items: center;
}
.orient-row > span:first-child {
    margin-right: auto;
}
.radio {
    width: 13px;
    height: 13px;
    border-radius: 50%;
    border: 1px solid #333;
    display: flex;
    align-items: center;
    justify-content: center;
    flex: none;
}
.radio.on::after {
    content: '';
    width: 7px;
    height: 7px;
    border-radius: 50%;
    background: #333;
}
.radio-text {
    margin-left: 7px;
}
.radio-text + .radio {
    margin-left: 14px;
}
.frame {
    position: relative;
    width: 540px;
    height: 90px;
    margin: 13px 0 0 17px;
    border: 1px solid #adadad;
    padding-top: 11px;
}
.legend {
    position: absolute;
    left: 3px;
    top: -8px;
    background: #fff;
    padding: 0 1px;
    line-height: 14px;
}
.frame-row {
    display: flex;
    align-items: center;
    height: 23px;
}
.frame-row.second {
    margin-top: 5px;
}
.frame-label {
    width: 182px;
    flex: none;
    text-align: right;
    margin-right: 12px;
}
.num-input {
    width: 74px;
    height: 23px;
    flex: none;
    border: 1px solid #adadad;
    line-height: 21px;
    padding-left: 3px;
}
.units-label {
    margin-left: auto;
    margin-right: 12px;
}
.frame-row .combo {
    margin-right: 10px;
}
.resize-row {
    display: flex;
    align-items: center;
    gap: 6px;
    height: 18px;
    padding-left: 10px;
    margin-top: 4px;
}
.expander {
    width: 8px;
    height: 8px;
    flex: none;
    border: 1px solid #888;
    background:
        linear-gradient(#333, #333) center / 4px 1px no-repeat,
        linear-gradient(#333, #333) center / 1px 4px no-repeat;
}
.border-head {
    margin-top: 16px;
}
.check-row {
    height: 23px;
    display: flex;
    align-items: center;
    gap: 6px;
    margin-left: 19px;
}
.check {
    width: 13px;
    height: 13px;
    flex: none;
    border: 1px solid #333;
    position: relative;
}
.check.on::after {
    content: '';
    position: absolute;
    left: 3px;
    top: 0;
    width: 5px;
    height: 9px;
    border-right: 1px solid #444;
    border-bottom: 1px solid #444;
    transform: rotate(40deg);
}
.color-row {
    height: 12px;
    margin-top: 5px;
}
.border-color {
    width: 247px;
    height: 12px;
    background: #666;
}
```
FILE: script.js
```js
// Inkscape default palette
const paletteColors = [
    '#000000', '#1a1a1a', '#333333', '#4d4d4d', '#666666', '#808080', '#999999', '#b3b3b3', '#cccccc', '#e6e6e6', '#ececec', '#f2f2f2', '#f9f9f9', '#ffffff',
    '#800000', '#ff0000', '#808000', '#ffff00', '#008000', '#00ff00', '#008080', '#00ffff', '#000080', '#0000ff', '#800080', '#ff00ff',
    '#2b0000', '#550000', '#800000', '#aa0000', '#d40000', '#ff0000', '#ff2a2a', '#ff5555', '#ff8080', '#ffaaaa', '#ffd5d5',
    '#280b0b', '#501616', '#782121', '#a02c2c', '#c83737', '#d35f5f', '#de8787', '#e9afaf', '#f4d7d7',
    '#241c1c', '#483737', '#6c5353', '#916f6f', '#ac9393', '#c8b7b7', '#e3dbdb',
    '#2b1100', '#552200', '#803300', '#aa4400', '#d45500', '#ff6600', '#ff7f2a', '#ff9955', '#ffb380', '#ffccaa', '#ffe6d5',
    '#28170b', '#502d16', '#784421', '#a05a2c', '#c87137', '#d38d5f'
];

const swatches = document.getElementById('swatches');
paletteColors.forEach(color => {
    const swatch = document.createElement('div');
    swatch.className = 'swatch';
    swatch.style.background = color;
    swatches.appendChild(swatch);
});

// Horizontal ruler: 50 units every 61.8px, 0 sits 482px from the ruler's left
function drawHorizontalRuler() {
    const width = 1226, step = 61.8, origin = 482;
    let ticks = 'M1.500 4V8', labels = '';
    for (let i = -90; i < 130; i++) {
        const x = Math.round(origin + i * step / 10) + 0.5;
        if (x < 0 || x > width) continue;
        const h = i % 10 === 0 ? 15 : (i % 2 === 0 ? 5 : 2);
        ticks += `M${x} ${18 - h}V18`;
    }
    // labels under the dialog are never seen, so skip them
    [-7, -6, -5, -4, -3, -2, -1, 0, 1, 11].forEach(k => {
        const x = Math.round(origin + k * step);
        labels += `<text class="ruler-text" x="${x + 2}" y="10">${k * 50}</text>`;
    });
    document.getElementById('hruler').innerHTML =
        `<svg width="${width}" height="18"><path d="${ticks}" stroke="#000" shape-rendering="crispEdges"/>${labels}<path d="M1162 9h7l-3.500 5z"/></svg>`;
}

// Vertical ruler: labels stack their digits below each 100 unit tick
function drawVerticalRuler() {
    const height = 536, step = 12.38, origin = 370;
    let ticks = '', labels = '';
    for (let i = -30; i < 14; i++) {
        const y = Math.round(origin + i * step) + 0.5;
        if (y < 0 || y > height) continue;
        const w = i % 10 === 0 ? 14 : (i % 2 === 0 ? 6 : 3);
        ticks += `M${18 - w} ${y}H18`;
    }
    [[122, '200'], [246, '100'], [370, '0'], [494, '-100']].forEach(([y, text]) => {
        text.split('').forEach((digit, n) => {
            labels += `<text class="ruler-text" x="5" y="${y + 9 + n * 8.5}">${digit}</text>`;
        });
    });
    document.getElementById('vruler').innerHTML =
        `<svg width="18" height="${height}"><path d="${ticks}" stroke="#000" shape-rendering="crispEdges"/>${labels}<path d="M11 158l5 4-5 4z"/></svg>`;
}

drawHorizontalRuler();
drawVerticalRuler();
```
